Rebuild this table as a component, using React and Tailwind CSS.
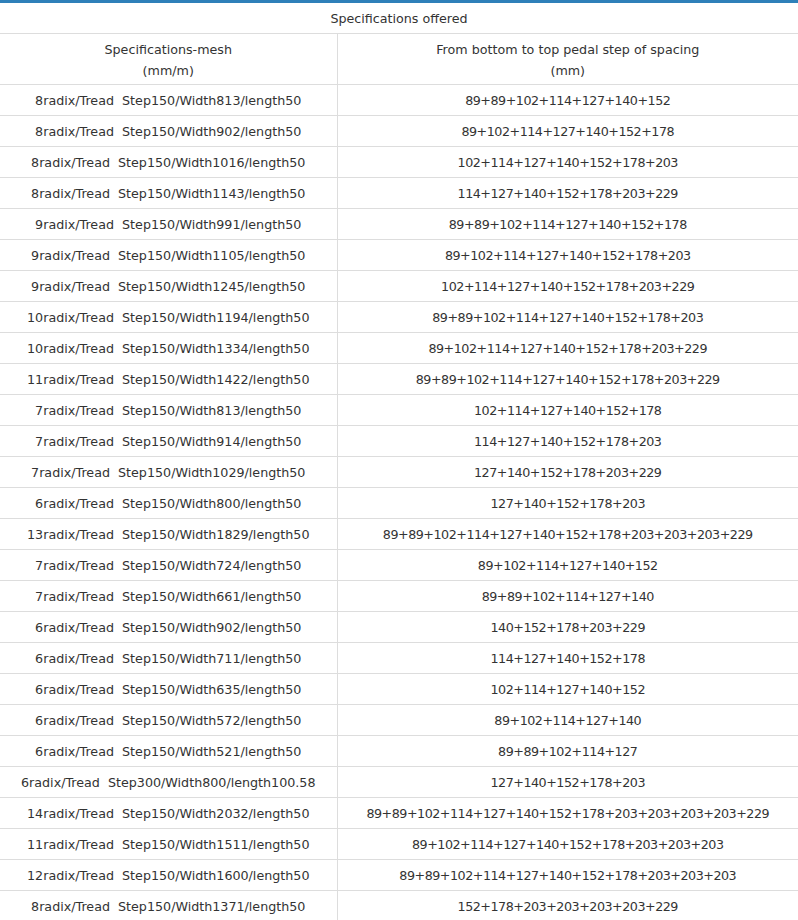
import React from 'react';

const rows = [
  ['8radix/Tread  Step150/Width813/length50', '89+89+102+114+127+140+152'],
  ['8radix/Tread  Step150/Width902/length50', '89+102+114+127+140+152+178'],
  ['8radix/Tread  Step150/Width1016/length50', '102+114+127+140+152+178+203'],
  ['8radix/Tread  Step150/Width1143/length50', '114+127+140+152+178+203+229'],
  ['9radix/Tread  Step150/Width991/length50', '89+89+102+114+127+140+152+178'],
  ['9radix/Tread  Step150/Width1105/length50', '89+102+114+127+140+152+178+203'],
  ['9radix/Tread  Step150/Width1245/length50', '102+114+127+140+152+178+203+229'],
  ['10radix/Tread  Step150/Width1194/length50', '89+89+102+114+127+140+152+178+203'],
  ['10radix/Tread  Step150/Width1334/length50', '89+102+114+127+140+152+178+203+229'],
  ['11radix/Tread  Step150/Width1422/length50', '89+89+102+114+127+140+152+178+203+229'],
  ['7radix/Tread  Step150/Width813/length50', '102+114+127+140+152+178'],
  ['7radix/Tread  Step150/Width914/length50', '114+127+140+152+178+203'],
  ['7radix/Tread  Step150/Width1029/length50', '127+140+152+178+203+229'],
  ['6radix/Tread  Step150/Width800/length50', '127+140+152+178+203'],
  ['13radix/Tread  Step150/Width1829/length50', '89+89+102+114+127+140+152+178+203+203+203+229'],
  ['7radix/Tread  Step150/Width724/length50', '89+102+114+127+140+152'],
  ['7radix/Tread  Step150/Width661/length50', '89+89+102+114+127+140'],
  ['6radix/Tread  Step150/Width902/length50', '140+152+178+203+229'],
  ['6radix/Tread  Step150/Width711/length50', '114+127+140+152+178'],
  ['6radix/Tread  Step150/Width635/length50', '102+114+127+140+152'],
  ['6radix/Tread  Step150/Width572/length50', '89+102+114+127+140'],
  ['6radix/Tread  Step150/Width521/length50', '89+89+102+114+127'],
  ['6radix/Tread  Step300/Width800/length100.58', '127+140+152+178+203'],
  ['14radix/Tread  Step150/Width2032/length50', '89+89+102+114+127+140+152+178+203+203+203+203+229'],
  ['11radix/Tread  Step150/Width1511/length50', '89+102+114+127+140+152+178+203+203+203'],
  ['12radix/Tread  Step150/Width1600/length50', '89+89+102+114+127+140+152+178+203+203+203'],
  ['8radix/Tread  Step150/Width1371/length50', '152+178+203+203+203+203+229'],
];

export default function App() {
  return (
    <div className="w-[798px] bg-white border-t-[3px] border-[#2e80b9] font-['DejaVu_Sans',Verdana,sans-serif] text-[12.7px] text-[#333]">
      <table className="w-full border-collapse table-fixed">
        <colgroup>
          <col className="w-[337px]" />
          <col />
        </colgroup>
        <thead>
          <tr className="h-[30px] border-b border-[#ddd]">
            <th colSpan={2} className="font-normal text-center pt-px">Specifications offered</th>
          </tr>
          <tr className="h-[51px] border-b border-[#ddd]">
            <th className="font-normal text-center leading-[21px] pt-[2px] border-r border-[#ddd]">
              Specifications-mesh
              <br />
              (mm/m)
            </th>
            <th className="font-normal text-center leading-[21px] pt-[2px]">
              From bottom to top pedal step of spacing
              <br />
              (mm)
            </th>
          </tr>
        </thead>
        <tbody>
          {rows.map(([spec, spacing], i) => (
            <tr key={i} className="h-[31px] border-b border-[#ddd]">
              <td className="text-center whitespace-pre pt-[2px] border-r border-[#ddd]">{spec}</td>
              <td className="text-center pt-[2px] tracking-[-0.48px]">{spacing}</td>
            </tr>
          ))}
        </tbody>
      </table>
    </div>
  );
}
